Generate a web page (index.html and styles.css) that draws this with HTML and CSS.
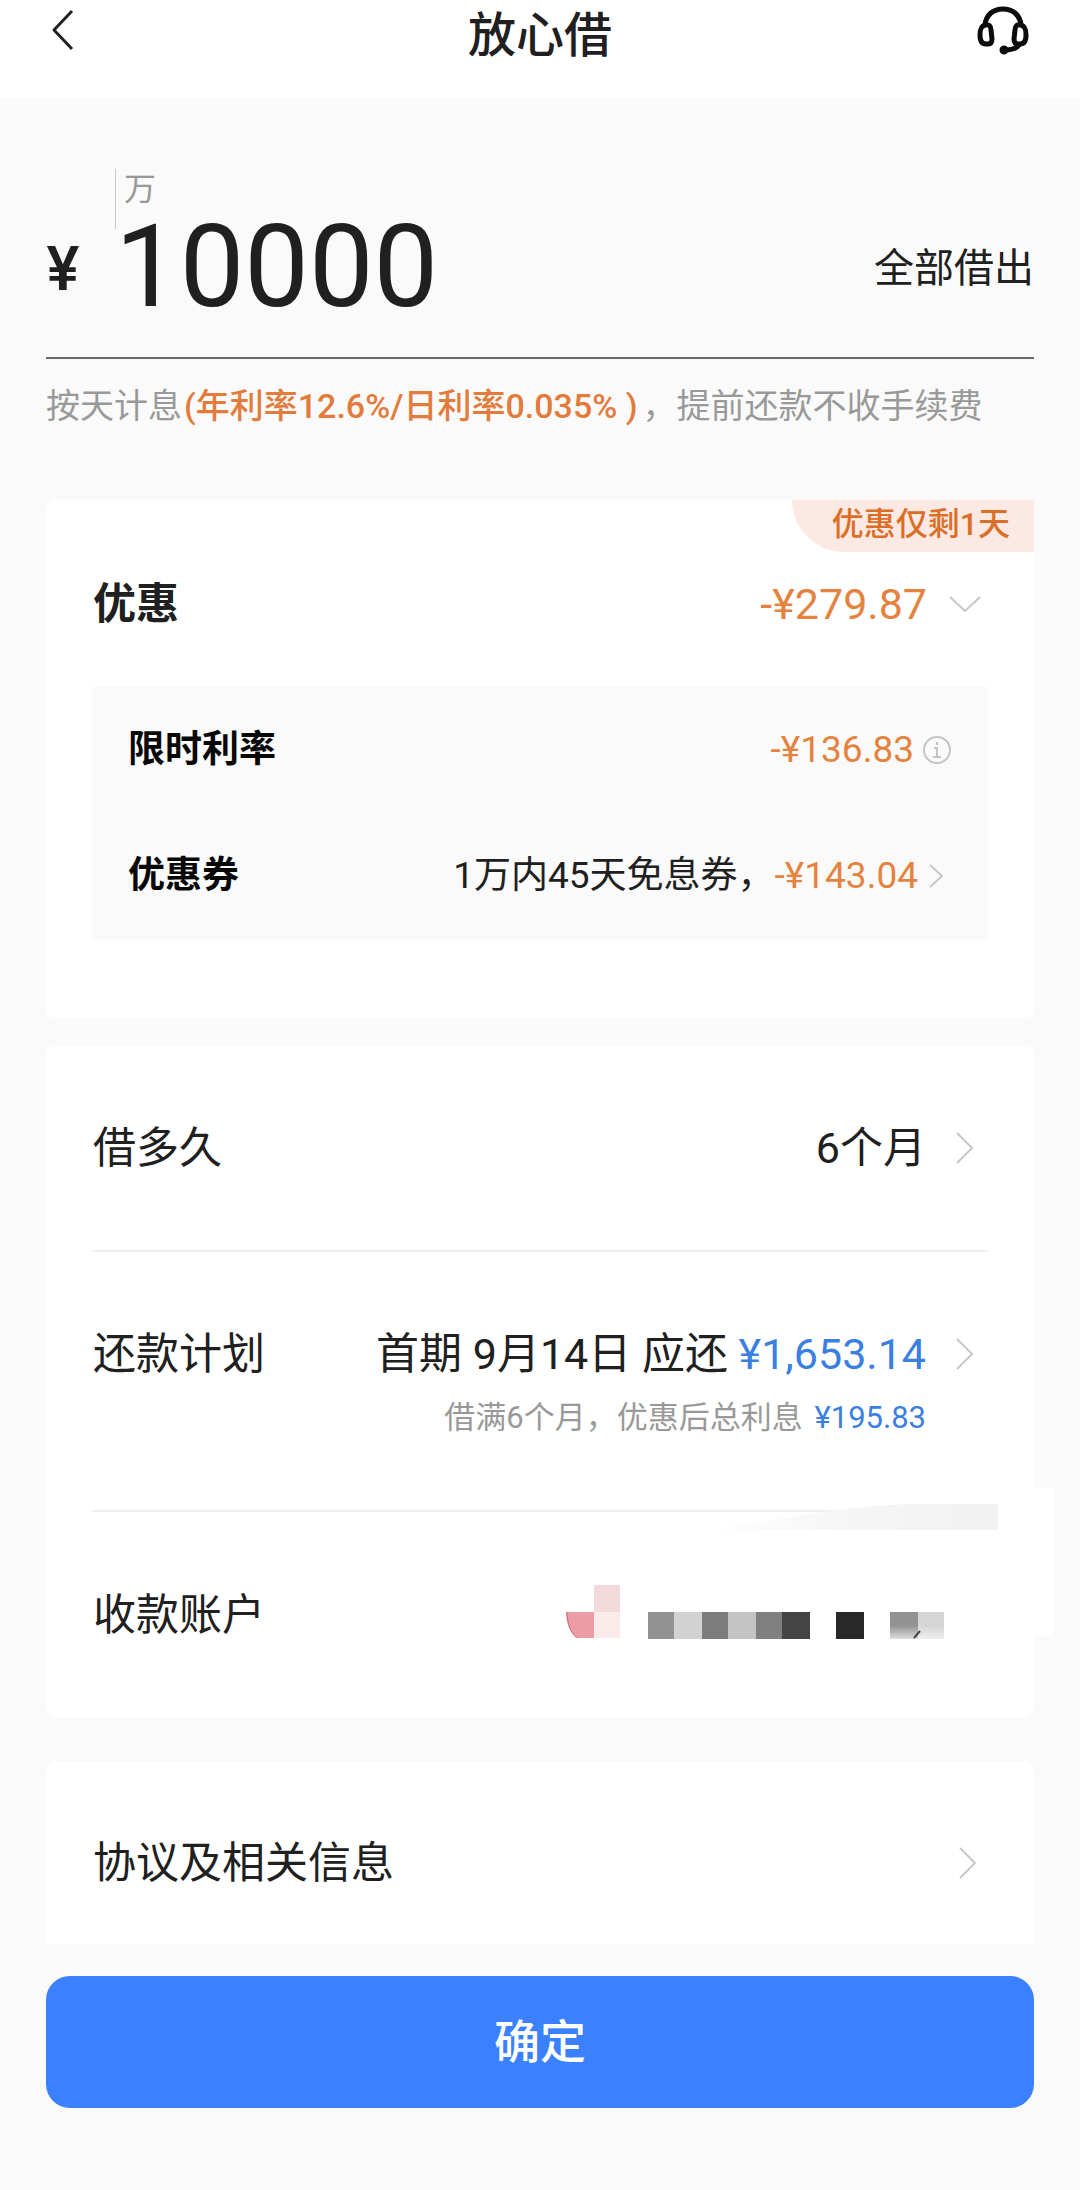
FILE: index.html
```html
<!DOCTYPE html>
<html lang="zh-CN">
<head>
<meta charset="utf-8">
<meta name="viewport" content="width=device-width, initial-scale=1">
<title>放心借</title>
<link rel="stylesheet" href="styles.css">
</head>
<body>
<header class="topbar">
  <button class="icon-btn" type="button" aria-label="返回">
    <svg class="back" viewBox="0 0 24 42"><path d="M21 2 3 21l18 19"/></svg>
  </button>
  <h1 class="title">放心借</h1>
  <button class="icon-btn" type="button" aria-label="客服">
    <svg class="headset" viewBox="0 0 52 50">
      <path d="M8 20C9 10 16 4 26 4s17 6 18 16"/>
      <path d="M8 20c-4 1-5 4-5 10s2 9 6 9h2c3 0 4-2 4-5l-1-9c0-4-2-6-6-5z"/>
      <path d="M44 20c4 1 5 4 5 10s-2 9-6 9h-2c-3 0-4-2-4-5l1-9c0-4 2-6 6-5z"/>
      <path d="M42 40c-3 4-7 5-14 5"/>
      <circle cx="27" cy="45" r="2"/>
    </svg>
  </button>
</header>

<main class="page">
  <section class="amount">
    <div class="amount-row">
      <label class="currency" for="sum">¥</label>
      <div class="entry">
        <span class="unit">万</span>
        <input class="sum" id="sum" type="text" inputmode="numeric" value="10000">
      </div>
      <button class="all" type="button">全部借出</button>
    </div>
    <p class="rate">按天计息<em>(年利率12.6%/日利率0.035% )</em>，提前还款不收手续费</p>
  </section>

  <section class="card offers">
    <span class="badge">优惠仅剩1天</span>
    <button class="row offers-head" type="button">
      <strong class="label">优惠</strong>
      <span class="value orange">-¥279.87</span>
      <svg class="chev-down" viewBox="0 0 32 18"><path d="m1 2 15 14L31 2"/></svg>
    </button>
    <div class="details">
      <div class="row detail">
        <strong class="label">限时利率</strong>
        <span class="value orange">-¥136.83</span>
        <svg class="info" viewBox="0 0 30 30"><circle cx="15" cy="15" r="13"/><path d="M12 13h3v9m-4 0h8M15 7v3"/></svg>
      </div>
      <button class="row detail" type="button">
        <strong class="label">优惠券</strong>
        <span class="value">1万内45天免息券，<span class="orange">-¥143.04</span></span>
        <svg class="chev-small" viewBox="0 0 16 26"><path d="m2 2 12 11L2 24"/></svg>
      </button>
    </div>
  </section>

  <section class="card plan">
    <button class="row term" type="button">
      <span class="label">借多久</span>
      <span class="value">6个月</span>
      <svg class="chev" viewBox="0 0 18 32"><path d="m1 1 15 15L1 31"/></svg>
    </button>
    <button class="row schedule" type="button">
      <span class="label">还款计划</span>
      <span class="value">首期 9月14日 应还 <span class="blue">¥1,653.14</span></span>
      <svg class="chev" viewBox="0 0 18 32"><path d="m1 1 15 15L1 31"/></svg>
      <span class="note">借满6个月，优惠后总利息 <span class="blue">¥195.83</span></span>
    </button>
    <div class="row account">
      <span class="label">收款账户</span>
      <svg class="masked" viewBox="0 0 378 54" role="img" aria-label="账户已隐藏">
        <path d="M0 27h28v26H10C3 46 0 37 0 27z" fill="#eb9ca4"/>
        <path d="M1 27c0 10 3 20 10 26" fill="none" stroke="#c9747d"/>
        <path d="M28 0h26v27H28z" fill="#f2d9db"/>
        <path d="M28 27h26v26H28z" fill="#faebea"/>
        <path d="M82 27h26v27H82z" fill="#929292"/>
        <path d="M108 27h28v27h-28z" fill="#d2d2d2"/>
        <path d="M136 27h26v27h-26z" fill="#7c7c7c"/>
        <path d="M162 27h28v27h-28z" fill="#c4c4c4"/>
        <path d="M190 27h26v27h-26z" fill="#808080"/>
        <path d="M216 27h28v27h-28z" fill="#444"/>
        <path d="M270 27h28v27h-28z" fill="#282828"/>
        <path d="M324 27h28v27h-28z" fill="url(#fade-mid)"/>
        <path d="M352 27h26v27h-26z" fill="url(#fade-light)"/>
        <path d="m348 53 6-7" fill="none" stroke="#444" stroke-width="2"/>
        <defs>
          <linearGradient id="fade-mid" x2="0" y2="1"><stop offset=".5" stop-color="#929292"/><stop offset="1" stop-color="#ddd"/></linearGradient>
          <linearGradient id="fade-light" x2="0" y2="1"><stop offset=".5" stop-color="#d5d5d5"/><stop offset="1" stop-color="#eee"/></linearGradient>
        </defs>
      </svg>
      <svg class="smear" viewBox="0 0 300 26" aria-hidden="true">
        <defs><linearGradient id="smear"><stop offset="0" stop-color="#fff"/><stop offset=".5" stop-color="#f6f6f6"/><stop offset="1" stop-color="#f1f1f1"/></linearGradient></defs>
        <path d="M0 26C60 22 120 4 210 0h90v26z" fill="url(#smear)"/>
      </svg>
    </div>
  </section>

  <section class="card terms">
    <a class="row" href="#terms">
      <span class="label">协议及相关信息</span>
      <svg class="chev" viewBox="0 0 18 32"><path d="m1 1 15 15L1 31"/></svg>
    </a>
  </section>

  <button class="confirm" type="button">确定</button>
</main>
</body>
</html>
```

FILE: styles.css
```css
* { box-sizing: border-box; }

body {
  margin: 0;
  background: #fafafa;
  color: #202020;
  font-family: Roboto, "Noto Sans CJK SC", sans-serif;
  font-size: 43px;
  line-height: 60px;
}

button, input {
  margin: 0;
  padding: 0;
  border: 0;
  background: none;
  color: inherit;
  font: inherit;
}

svg {
  display: block;
  flex: none;
  fill: none;
  stroke-linejoin: round;
}

.topbar {
  display: flex;
  align-items: flex-start;
  justify-content: space-between;
  height: 98px;
  padding: 0 51px;
  background: #fff;
}

.icon-btn {
  display: flex;
  align-items: center;
  width: 56px;
  height: 60px;
}

.back { width: 24px; height: 42px; stroke: #222; stroke-width: 3; }

.headset {
  width: 52px;
  height: 50px;
  margin-left: auto;
  stroke: #0c0c0c;
  stroke-width: 5;
  stroke-linecap: round;
}
.headset circle { fill: #0c0c0c; }

.title {
  margin: 0;
  font-size: 48px;
  font-weight: 500;
  line-height: 72px;
}

.page { padding: 71px 46px 0; }

.amount-row {
  display: flex;
  align-items: flex-end;
  height: 190px;
  border-bottom: 2px solid #6a6a6a;
}

.currency {
  width: 69px;
  padding-bottom: 59px;
  font-family: Inter, Roboto, sans-serif;
  font-size: 60px;
  font-weight: 600;
}

.entry {
  flex: 1;
  min-width: 0;
  height: 188px;
}

.unit {
  display: block;
  height: 60px;
  padding-left: 8px;
  border-left: 1px solid #c8c8c8;
  color: #999;
  font-size: 32px;
  line-height: 40px;
}

.sum {
  display: block;
  width: 100%;
  height: 136px;
  margin-top: -30px;
  font-size: 115px;
  line-height: 136px;
}

.all { padding-bottom: 58px; font-size: 40px; }

.rate {
  margin: 0;
  padding-top: 17px;
  color: #999;
  font-size: 34px;
}
.rate em {
  padding: 0 5px 0 2px;
  color: #e27b3c;
  font-style: normal;
  font-weight: 500;
}

.card {
  position: relative;
  border-radius: 10px;
  background: #fff;
}

.row {
  display: flex;
  align-items: center;
  width: 100%;
  text-align: left;
}

.value { margin-left: auto; }
.orange { color: #e4833f; }
.blue { color: #3b7fe0; }

.chev, .chev-down, .chev-small { stroke: #c8c8c8; stroke-width: 2; }
.chev { width: 18px; height: 32px; }
.chev-down { width: 32px; height: 18px; margin-left: 22px; }
.chev-small { width: 16px; height: 26px; margin-left: 10px; }
.info { width: 30px; height: 30px; margin-left: 8px; stroke: #c4c4c4; stroke-width: 2; }

.offers {
  margin-top: 64px;
  padding: 0 46px 78px;
}

.badge {
  position: absolute;
  top: 0;
  right: 0;
  padding: 0 24px 4px 40px;
  border-bottom-left-radius: 54px;
  background: #fde9e3;
  color: #dc6f28;
  font-size: 32px;
  font-weight: 500;
  line-height: 48px;
}

.offers-head {
  height: 187px;
  padding: 20px 7px 0 1px;
}

.details {
  height: 253px;
  padding: 0 36px;
  background: #fafafa;
  font-size: 37px;
}
.detail { height: 126px; }
.detail .label { color: #080808; }
button.detail { padding-right: 8px; }

.plan {
  margin-top: 28px;
  padding: 0 46px;
}

.plan .value { margin-right: 30px; }
.plan .chev { margin-right: 14px; }
.plan .label, .terms .label { padding-left: 1px; }

.term {
  height: 206px;
  border-bottom: 2px solid #efefef;
}

.schedule {
  flex-wrap: wrap;
  align-content: flex-start;
  height: 260px;
  padding-top: 72px;
  border-bottom: 2px solid #efefef;
}

.note {
  width: 100%;
  padding-right: 62px;
  color: #999;
  font-size: 31px;
  line-height: 68px;
  text-align: right;
}
.note .blue { padding-left: 4px; }

.account {
  position: relative;
  height: 205px;
}
.masked { width: 378px; height: 54px; margin: 0 44px 6px auto; }

/* light patch that runs past the card's right edge */
.account::after {
  content: "";
  position: absolute;
  top: -24px;
  right: -65px;
  width: 19px;
  height: 148px;
  background: #fff;
}

.smear {
  position: absolute;
  top: -8px;
  right: -10px;
  width: 300px;
  height: 26px;
}

.terms {
  margin-top: 44px;
  padding: 0 57px 0 46px;
  border-radius: 10px 10px 0 0;
}
.terms .row { height: 183px; padding-top: 20px; color: inherit; text-decoration: none; }
.terms .chev { margin-left: auto; }

.confirm {
  display: block;
  width: 100%;
  height: 132px;
  margin-top: 32px;
  border-radius: 24px;
  background: #3a80ff;
  color: #fff;
  font-size: 46px;
  font-weight: 500;
}
```
